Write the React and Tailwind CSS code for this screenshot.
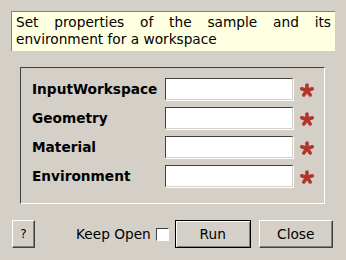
import React from 'react';

const fields = ['InputWorkspace', 'Geometry', 'Material', 'Environment'];

function Star() {
  // five rounded arms, like the mandatory-field marker
  const arms = [-90, -18, 54, 126, 198].map((a) => {
    const r = (a * Math.PI) / 180;
    return { x: 8 + Math.cos(r) * 5.5, y: 8.5 + Math.sin(r) * 5.5 };
  });
  return (
    <svg width="16" height="17" viewBox="0 0 16 17">
      {arms.map((p, i) => (
        <line key={i} x1="8" y1="8.5" x2={p.x} y2={p.y} stroke="#b3362a" strokeWidth="3.6" strokeLinecap="round" />
      ))}
    </svg>
  );
}

function Button({ children, def, className = '' }) {
  return (
    <button
      className={
        'h-[28px] bg-[#d4d0c8] text-[13.7px] text-black border ' +
        (def
          ? 'border-black shadow-[inset_1px_1px_0_#fff,inset_-1px_-1px_0_#808080] '
          : 'border-t-white border-l-white border-r-[#404040] border-b-[#404040] shadow-[inset_-1px_-1px_0_#808080] ') +
        className
      }
    >
      {children}
    </button>
  );
}

export default function App() {
  return (
    <div
      className="w-[346px] h-[260px] bg-[#d4d0c8] overflow-hidden flex flex-col"
      style={{ fontFamily: '"DejaVu Sans", Verdana, sans-serif' }}
    >
      {/* description */}
      <div className="mt-[11px] ml-[11px] w-[324px] h-[40px] bg-[#ffffe1] border-t border-l border-[#808080] border-r-white border-b-white px-[4px] pt-[2px] text-[13.7px] leading-[17px] text-black text-justify [text-align-last:left]">
        Set properties of the sample and its environment for a workspace
      </div>

      {/* property group */}
      <div className="mt-[16px] ml-[20px] w-[305px] h-[137px] border border-t-[#404040] border-l-[#404040] border-r-white border-b-white pl-[11px] pt-[10px]">
        <div className="flex flex-col gap-[7px]">
          {fields.map((f) => (
            <div key={f} className="flex items-center h-[22px]">
              <span className="w-[133px] font-bold text-[13.7px] text-black">{f}</span>
              <div className="w-[128px] h-[22px] bg-white border border-t-[#404040] border-l-[#404040] border-r-[#d4d0c8] border-b-[#d4d0c8] shadow-[1px_1px_0_#fff]" />
              <div className="ml-[6px] mt-[2px]">
                <Star />
              </div>
            </div>
          ))}
        </div>
      </div>

      {/* buttons */}
      <div className="flex items-center mt-[16px] pl-[12px]">
        <Button className="w-[23px] h-[27px] !text-[12px]">?</Button>
        <span className="ml-[41px] text-[13.7px] text-black">Keep Open</span>
        <span className="ml-[5px] w-[13px] h-[13px] bg-white border border-t-[#404040] border-l-[#404040] border-r-white border-b-white" />
        <Button def className="ml-[6px] w-[76px]">Run</Button>
        <Button className="ml-[8px] w-[74px]">Close</Button>
      </div>
    </div>
  );
}
